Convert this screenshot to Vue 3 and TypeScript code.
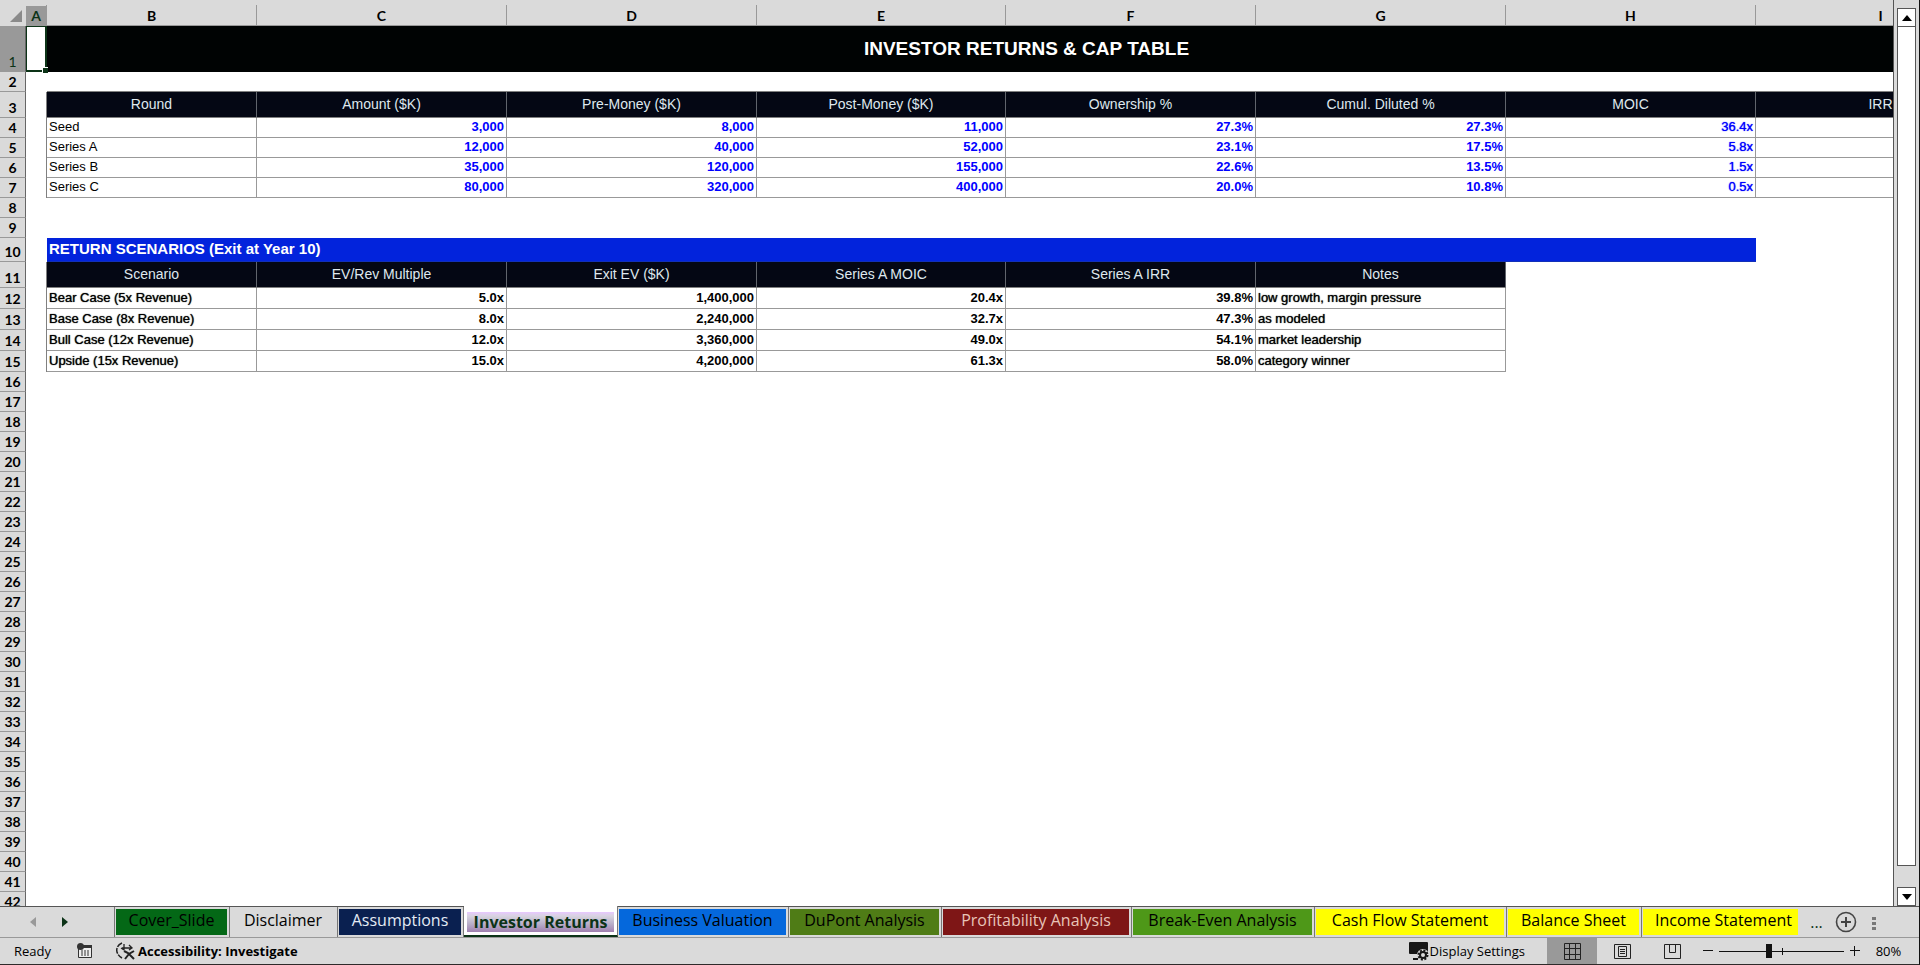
<script setup lang="ts">
interface Tab { name: string; width: number; kind: string }
interface Cell { text: string; cls?: string; span?: number }

const columns = [
  { letter: 'A', width: 21 },
  { letter: 'B', width: 210 },
  { letter: 'C', width: 250 },
  { letter: 'D', width: 250 },
  { letter: 'E', width: 249 },
  { letter: 'F', width: 250 },
  { letter: 'G', width: 250 },
  { letter: 'H', width: 250 },
  { letter: 'I', width: 250 },
]

const heads = (names: string[]): Cell[] => names.map((text) => ({ text, cls: 'head' }))
const round = (name: string, values: string[]): Cell[] => [
  { text: name, cls: 'box label' },
  ...values.map((text, i) => ({ text, cls: i < 5 ? 'box num input' : 'box num input light' })),
  { text: '', cls: 'box' },
]
const scenario = (name: string, values: string[], note: string): Cell[] => [
  { text: name, cls: 'box label medium' },
  ...values.map((text) => ({ text, cls: 'box num' })),
  { text: note, cls: 'box label medium' },
]

const filled: Record<number, { height: number; cells: Cell[] }> = {
  1: { height: 46, cells: [{ text: 'INVESTOR RETURNS & CAP TABLE', cls: 'title', span: 8 }] },
  3: { height: 26, cells: heads(['Round', 'Amount ($K)', 'Pre-Money ($K)', 'Post-Money ($K)', 'Ownership %', 'Cumul. Diluted %', 'MOIC', 'IRR']) },
  4: { height: 20, cells: round('Seed', ['3,000', '8,000', '11,000', '27.3%', '27.3%', '36.4x']) },
  5: { height: 20, cells: round('Series A', ['12,000', '40,000', '52,000', '23.1%', '17.5%', '5.8x']) },
  6: { height: 20, cells: round('Series B', ['35,000', '120,000', '155,000', '22.6%', '13.5%', '1.5x']) },
  7: { height: 20, cells: round('Series C', ['80,000', '320,000', '400,000', '20.0%', '10.8%', '0.5x']) },
  10: { height: 24, cells: [{ text: 'RETURN SCENARIOS (Exit at Year 10)', cls: 'section', span: 7 }] },
  11: { height: 26, cells: heads(['Scenario', 'EV/Rev Multiple', 'Exit EV ($K)', 'Series A MOIC', 'Series A IRR', 'Notes']) },
  12: { height: 21, cells: scenario('Bear Case (5x Revenue)', ['5.0x', '1,400,000', '20.4x', '39.8%'], 'low growth, margin pressure') },
  13: { height: 21, cells: scenario('Base Case (8x Revenue)', ['8.0x', '2,240,000', '32.7x', '47.3%'], 'as modeled') },
  14: { height: 21, cells: scenario('Bull Case (12x Revenue)', ['12.0x', '3,360,000', '49.0x', '54.1%'], 'market leadership') },
  15: { height: 21, cells: scenario('Upside (15x Revenue)', ['15.0x', '4,200,000', '61.3x', '58.0%'], 'category winner') },
}

const rows = Array.from({ length: 42 }, (_, i) => {
  const n = i + 1
  const row = filled[n] ?? { height: 20, cells: [] }
  const used = row.cells.reduce((sum, c) => sum + (c.span ?? 1), 0)
  return { n, ...row, rest: 8 - used }
})

const tabs: Tab[] = [
  { name: 'Cover_Slide', width: 116, kind: 'green' },
  { name: 'Disclaimer', width: 108, kind: 'plain' },
  { name: 'Assumptions', width: 126, kind: 'navy' },
  { name: 'Investor Returns', width: 154, kind: 'active' },
  { name: 'Business Valuation', width: 171, kind: 'blue' },
  { name: 'DuPont Analysis', width: 153, kind: 'olive' },
  { name: 'Profitability Analysis', width: 190, kind: 'maroon' },
  { name: 'Break-Even Analysis', width: 183, kind: 'grass' },
  { name: 'Cash Flow Statement', width: 192, kind: 'yellow' },
  { name: 'Balance Sheet', width: 135, kind: 'yellow' },
  { name: 'Income Statement', width: 156, kind: 'yellow cut' },
]
</script>

<template>
  <div class="app">
    <div class="work">
      <div class="sheet">
        <table>
          <colgroup>
            <col class="gutter">
            <col v-for="c in columns" :key="c.letter" :style="{ width: c.width + 'px' }">
          </colgroup>
          <thead>
            <tr class="letters">
              <th class="corner"><svg width="12" height="12" viewBox="0 0 12 12"><path d="M12 0V12H0Z" fill="#8a8a8a" /></svg></th>
              <th v-for="c in columns" :key="c.letter" scope="col" :class="{ picked: c.letter === 'A' }">{{ c.letter }}</th>
            </tr>
          </thead>
          <tbody>
            <tr v-for="r in rows" :key="r.n" :style="{ height: r.height + 'px' }">
              <th scope="row" :class="{ picked: r.n === 1 }">{{ r.n }}</th>
              <td :class="{ cursor: r.n === 1, 'edge-right': (r.n >= 3 && r.n <= 7) || (r.n >= 11 && r.n <= 15) }"><i v-if="r.n === 1" class="handle"></i></td>
              <td v-for="(c, i) in r.cells" :key="i" :class="c.cls" :colspan="c.span ?? 1">{{ c.text }}</td>
              <td v-if="r.rest > 0" :colspan="r.rest" :class="{ 'edge-bottom': r.n === 2 }"></td>
            </tr>
          </tbody>
        </table>
      </div>
      <div class="scroll">
        <button class="arrow" type="button" aria-label="Scroll up"><svg width="10" height="6" viewBox="0 0 10 6"><path d="M5 0L10 6H0Z" /></svg></button>
        <div class="thumb"></div>
        <div class="track"></div>
        <button class="arrow" type="button" aria-label="Scroll down"><svg width="10" height="6" viewBox="0 0 10 6"><path d="M0 0H10L5 6Z" /></svg></button>
      </div>
    </div>

    <nav class="tabbar" aria-label="Sheets">
      <div class="movers">
        <button type="button" aria-label="Previous sheet"><svg width="6" height="10" viewBox="0 0 6 10"><path d="M6 0V10L0 5Z" fill="#999" /></svg></button>
        <button type="button" aria-label="Next sheet"><svg width="6" height="10" viewBox="0 0 6 10"><path d="M0 0V10L6 5Z" fill="#0c3317" /></svg></button>
      </div>
      <button v-for="t in tabs" :key="t.name" type="button" class="tab" :class="t.kind" :style="{ width: t.width + 'px' }"><span>{{ t.name }}</span></button>
      <button type="button" class="more">...</button>
      <button type="button" class="add" aria-label="New sheet">
        <svg width="22" height="22" viewBox="0 0 22 22" fill="none" stroke="#444"><circle cx="11" cy="11" r="9.5" stroke-width="1.6" /><path d="M11 6V16M6 11H16" stroke-width="2" /></svg>
      </button>
      <svg class="dots" width="4" height="14" viewBox="0 0 4 14" fill="#777"><path d="M0 0H4V3H0ZM0 5H4V8H0ZM0 10H4V13H0Z" /></svg>
    </nav>

    <footer class="status">
      <span class="ready">Ready</span>
      <button type="button" class="macro" aria-label="Record macro">
        <svg width="16" height="16" viewBox="0 0 16 16"><path d="M1.5 3.5H14.5V14.5H1.5Z" fill="#eee" stroke="#333" /><path d="M4 2H15V5H4Z" fill="#333" /><circle cx="3.5" cy="3.5" r="3.5" fill="#333" /><path d="M4 8H6M7 8H9M10 8H12M4 10H6M7 10H9M10 10H12M4 12H6M7 12H9M10 12H12" stroke="#333" /></svg>
      </button>
      <button type="button" class="access">
        <svg width="20" height="18" viewBox="0 0 20 18" fill="none" stroke="#222"><path d="M6 1C-1 4 -1 12 6 16" stroke-width="1.5" stroke-dasharray="6 1" /><path d="M6 6H16M8 2V8M8 8L5 6M13 3L16 6L13 8" stroke-width="1.3" /><path d="M8 9L12 11L18 17M18 9L13 12L9 17" stroke-width="2" /></svg>
        <span>Accessibility: Investigate</span>
      </button>
      <span class="space"></span>
      <button type="button" class="display">
        <svg width="20" height="19" viewBox="0 0 20 19"><path d="M1 0H18Q19 0 19 1V12H1Q0 12 0 11V1Q0 0 1 0Z" fill="#161616" /><path d="M4 17H9" stroke="#161616" stroke-width="2" /><circle cx="14" cy="13" r="6" fill="#dadada" /><circle cx="14" cy="13" r="4.500" fill="none" stroke="#161616" stroke-dasharray="2 1.500" stroke-width="2" /><circle cx="14" cy="13" r="3" fill="none" stroke="#161616" stroke-width="2" /></svg>
        <span>Display Settings</span>
      </button>
      <button type="button" class="view on" aria-label="Normal view"><svg width="17" height="17" viewBox="0 0 17 17" fill="none" stroke="#222"><path d="M.5.5H16.5V16.5H.5ZM5.5 0V17M11.5 0V17M0 5.5H17M0 11.5H17" /></svg></button>
      <button type="button" class="view" aria-label="Page layout"><svg width="17" height="17" viewBox="0 0 17 17" fill="none" stroke="#222"><path d="M.5 1.5H16.5V15.5H.5ZM4.5 3.5H12.5V13.5H4.5ZM6 6.5H11M6 8.5H11M6 10.5H11" /></svg></button>
      <button type="button" class="view" aria-label="Page break preview"><svg width="17" height="17" viewBox="0 0 17 17" fill="none" stroke="#222"><path d="M.5 1.5H16.5V15.5H.5ZM5.5 1V9.500M11.500 1V9.500M5.500 9.500H11.500" /></svg></button>
      <button type="button" class="step" aria-label="Zoom out"><svg width="10" height="10" viewBox="0 0 10 10" stroke="#111"><path d="M0 4.5H10" /></svg></button>
      <input class="zoom" type="range" min="10" max="190" value="81" aria-label="Zoom">
      <button type="button" class="step" aria-label="Zoom in"><svg width="10" height="10" viewBox="0 0 10 10" stroke="#111"><path d="M0 4.5H10M4.500 0V10" /></svg></button>
      <button type="button" class="percent">80%</button>
    </footer>
  </div>
</template>

<style>
body { margin: 0; overflow: hidden; }
</style>

<style scoped>
.app {
  display: flex;
  flex-direction: column;
  height: 100vh;
  box-sizing: border-box;
  border-right: 1px solid #111;
  border-bottom: 1px solid #2e2a2a;
  background: #dadada;
  color: #000;
  font-family: "Open Sans", "Noto Sans", sans-serif;
}
button {
  padding: 0;
  border: 0;
  background: none;
  color: inherit;
  font: inherit;
}
svg { display: block; }

/* grid */
.work { flex: 1; min-height: 0; display: flex; }
.sheet {
  flex: 1;
  min-width: 0;
  overflow: hidden;
  background: #fff;
  border-right: 1px solid #555;
}
table {
  table-layout: fixed;
  border-collapse: separate;
  border-spacing: 0;
  width: 2006px;
}
.gutter { width: 26px; }
th, td { box-sizing: border-box; padding: 0; overflow: hidden; white-space: nowrap; }
.letters { height: 26px; }
.letters th {
  padding-top: 6px;
  background: #dadada;
  border-bottom: 1px solid #888;
  border-right: 1px solid #999;
  border-image: linear-gradient(#dadada 6px, #999 6px) 1;
  font: bold 14px/18px Lato, sans-serif;
}
.letters .corner { border-image: linear-gradient(#dadada, #dadada) 1; }
.corner svg { margin: 0 3px 0 auto; }
.letters .picked { background: linear-gradient(#dadada 6px, #999 6px); color: #0c3317; }
tbody th {
  padding-bottom: 1px;
  background: #dadada;
  border-bottom: 1px solid #999;
  border-right: 1px solid #666;
  font: bold 14px/17px Lato, sans-serif;
  vertical-align: bottom;
}
tbody .picked { background: #999; color: #0c3317; font-weight: normal; }
td { padding-bottom: 1px; font: 13px/16px "Liberation Sans", Arial, sans-serif; }
.edge-right { border-right: 1px solid #808080; }
.edge-bottom { border-bottom: 1px solid #808080; }
.cursor { position: relative; overflow: visible; border: 2px solid #0c3317; border-left-width: 1px; border-top-width: 1px; }
.handle { position: absolute; right: -3px; bottom: -3px; width: 5px; height: 5px; background: #0c3317; border: 1px solid #fff; border-right: 0; border-bottom: 0; }
td.title { background: #000303; color: #fff; font-size: 19px; line-height: 22px; font-weight: bold; text-align: center; }
td.head {
  background: #040714;
  color: #dfe8ee;
  border-right: 1px solid #60646c;
  border-bottom: 1px solid #808080;
  font-size: 14px;
  text-align: center;
}
td.box { border-right: 1px solid #999; border-bottom: 1px solid #999; }
td.label { padding-left: 2px; }
.medium { text-shadow: 0 0 1px #111; }
td.num { padding-right: 2px; text-align: right; font-weight: bold; }
.input { color: #00f; }
td.light { font-weight: normal; text-shadow: 0 0 1px #00f; }
td.section { padding-left: 2px; padding-bottom: 2px; background: #0223dc; color: #fff; font-size: 15px; font-weight: bold; border-bottom: 1px solid #1230b8; }

/* scroll bar */
.scroll {
  display: flex;
  flex-direction: column;
  width: 19px;
  padding: 8px 3px 0;
}
.arrow { display: flex; align-items: center; justify-content: center; height: 19px; background: #fff; border: 1px solid #555; }
.thumb { flex: 1; margin-top: -1px; background: #fff; border: 1px solid #555; }
.track { height: 21px; }

/* tabs */
.tabbar {
  display: flex;
  height: 32px;
  box-sizing: border-box;
  border-top: 1px solid #555;
  border-bottom: 1px solid #999;
  flex: none;
}
.movers { display: flex; align-items: center; width: 114px; gap: 26px; padding-left: 30px; box-sizing: border-box; flex: none; }
.tab {
  flex: none;
  box-sizing: border-box;
  padding: 2px 2px 3px 1px;
  border-right: 1px solid #777;
  font-size: 16px;
}
.tab span { display: block; height: 26px; line-height: 22px; white-space: nowrap; }
.tab.green { border-left: 1px solid #777; }
.green span { background: #046816; }
.navy span { background: #0a2050; color: #e4ebf5; }
.tab.active { margin-top: -1px; padding: 5px 3px 2px; background: #fff; border-bottom: 2px solid #0c3317; font-weight: bold; color: #0c3317; }
.active span { height: 20px; line-height: 20px; background: linear-gradient(#e8c8ff, #d8d4e0 20%, #b8aec8 60%, #a080b0); }
.blue span { background: #0568dc; }
.olive span { background: #4f7c16; }
.maroon span { background: #7e1616; color: #e8c4b8; }
.grass span { background: #4e9818; }
.yellow span { background: #ff0; }
.tab.cut { border-right: 0; padding-right: 0; }
.cut span { text-align: left; padding-left: 12px; }
.more { width: 37px; color: #0c3317; font-size: 16px; }
.dots { margin: 10px 0 0 15px; }

/* status bar */
.status { display: flex; align-items: center; height: 26px; flex: none; font-size: 13px; line-height: 18px; }
.ready { width: 64px; padding-left: 14px; box-sizing: border-box; }
.macro { margin: 0 23px 0 13px; }
.access { display: flex; align-items: center; gap: 2px; font-weight: bold; }
.space { flex: 1; }
.display { display: flex; align-items: center; gap: 1px; margin-right: 22px; }
.view { display: flex; align-items: center; justify-content: center; width: 50px; height: 26px; }
.on { background: #999; }
.step { margin: 0 6px; }
.zoom { appearance: none; width: 125px; height: 16px; margin: 0; background: linear-gradient(#111, #111) 63px 50% / 1px 7px no-repeat, linear-gradient(#111, #111) 0 50% / 100% 1px no-repeat; }
.zoom::-webkit-slider-thumb { appearance: none; width: 6px; height: 14px; background: #111; }
.percent { width: 45px; text-align: center; margin-right: 8px; }
</style>
